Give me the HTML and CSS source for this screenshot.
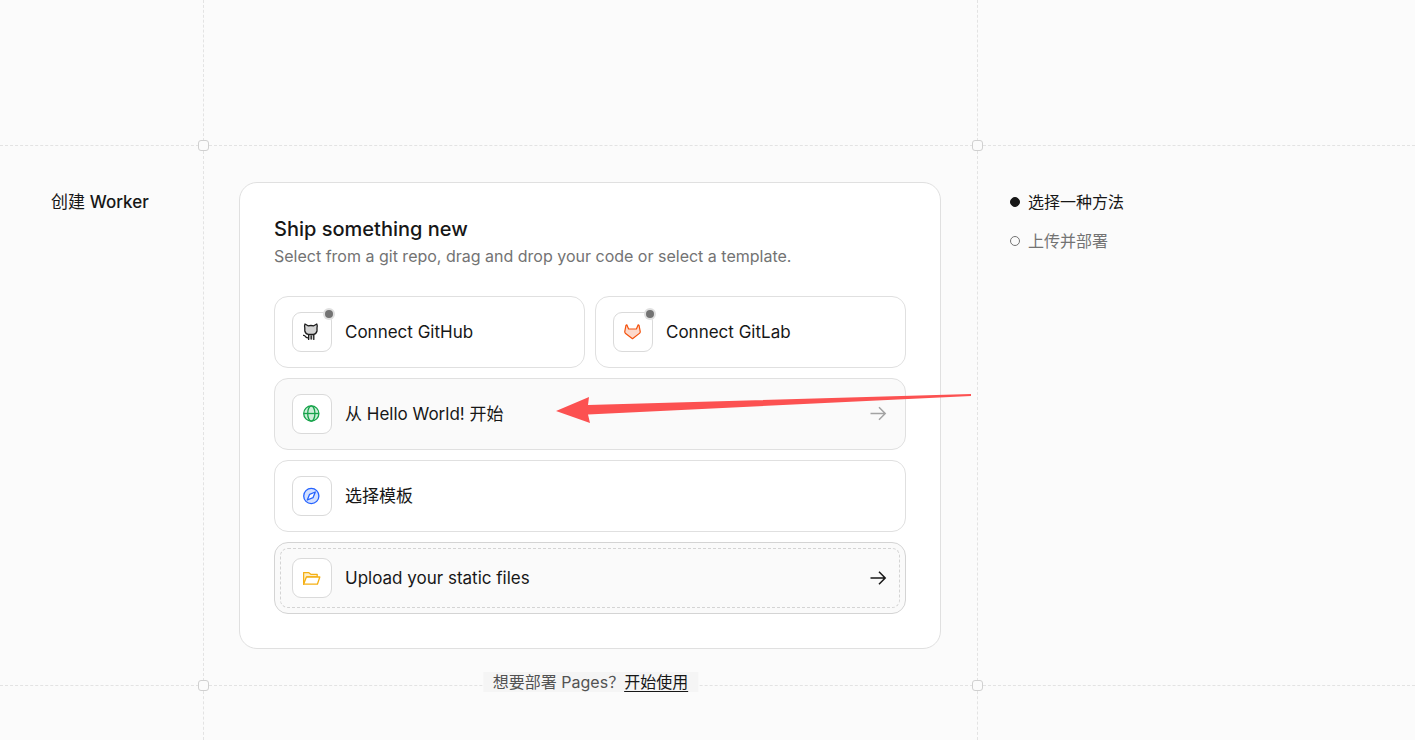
FILE: index.html
```html
<!DOCTYPE html>
<html lang="zh-CN">

<head>
	<meta charset="UTF-8">
	<meta name="viewport" content="width=device-width, initial-scale=1.0">
	<title>创建 Worker</title>
	<link rel="stylesheet" href="styles.css">
</head>

<body>

	<div class="page">
		<div class="cell"><span class="joint"></span></div>
		<div class="cell"><span class="joint"></span></div>
		<div class="cell last"></div>

		<div class="cell side">
			<h1 class="page-title">创建 <span class="product">Worker</span></h1>
			<span class="joint"></span>
		</div>

		<main class="cell main">
			<section class="card">
				<h2 class="card-title">Ship something new</h2>
				<p class="card-text">Select from a git repo, drag and drop your code or select a template.</p>

				<div class="options">
					<button type="button" class="option half">
						<span class="tile">
							<svg class="icon" viewBox="0 0 18 18" fill="none" stroke="#1d1d1d" stroke-width="1.3" stroke-linecap="round" stroke-linejoin="round">
								<path fill="#d4d4d4" d="M5.6 16.4V11.6H10.8V16.4" />
								<path fill="#d4d4d4" d="M2 1L5 2.8Q8 2.2 10.8 2.8L13.8 1Q14.6 3 14 4.8V8Q13.2 11 10.4 11.4H5.4Q2.6 11 1.8 8V4.8Q1.2 3 2 1Z" />
								<path d="M0.4 12.4Q1.8 12.2 2.4 13.6Q3 15 5.4 14.8M8.2 13V16" />
							</svg>
							<span class="status"></span>
						</span>
						Connect GitHub
					</button>
					<button type="button" class="option half">
						<span class="tile">
							<svg class="icon" viewBox="0 0 18 18" fill="#fcd9cb" stroke="#f4510b" stroke-width="1.2" stroke-linejoin="round">
								<path d="M2.8 1.8L4.6 6H12.4L14.2 1.8L15 2.2L16.2 8.3Q16.4 9.6 15.4 10.4L8.5 15.7L1.6 10.4Q0.6 9.6 0.8 8.3L2 2.2Z" />
							</svg>
							<span class="status"></span>
						</span>
						Connect GitLab
					</button>
					<button type="button" class="option active">
						<span class="tile">
							<svg class="icon" viewBox="0 0 18 18" fill="none" stroke="#16a34a" stroke-width="1.3">
								<circle cx="8.3" cy="8.5" r="7.6" fill="#cdeed9" />
								<ellipse cx="8.3" cy="8.5" rx="3.6" ry="7.6" />
								<path d="M0.8 8.5H15.8" />
							</svg>
						</span>
						从 Hello World! 开始
						<svg class="go" viewBox="0 0 18 18" fill="none" stroke="currentColor" stroke-width="1.5">
							<path d="M0.5 8.5H15M9 2.3L15.2 8.5L9 14.7" />
						</svg>
					</button>
					<button type="button" class="option">
						<span class="tile">
							<svg class="icon" viewBox="0 0 18 18" fill="none" stroke="#2563ff" stroke-width="1.3" stroke-linejoin="round">
								<circle cx="8.3" cy="9" r="7.6" fill="#d3e0ff" />
								<path fill="#fff" d="M12.3 5L10 10.7L4.3 13L6.6 7.3Z" />
							</svg>
						</span>
						选择模板
					</button>
					<button type="button" class="option upload">
						<span class="tile">
							<svg class="icon" viewBox="0 0 18 18" fill="none" stroke="#f5b014" stroke-width="1.3" stroke-linejoin="round">
								<path fill="#fdefc9" d="M0.6 15.2V3.6H5.6L7.8 5.3H14.2V8H4L0.6 15.2Z" />
								<path fill="#fff" d="M0.6 15.2L3.4 8H16.8L14.4 15.2Z" />
							</svg>
						</span>
						Upload your static files
						<svg class="go" viewBox="0 0 18 18" fill="none" stroke="currentColor" stroke-width="1.5">
							<path d="M0.5 9H15M9 2.8L15.2 9L9 15.2" />
						</svg>
					</button>
				</div>
			</section>

			<p class="pages-hint">想要部署 Pages？<a href="#">开始使用</a></p>
			<svg class="pointer" viewBox="0 0 416 30">
				<path fill="#fc5151" d="M0 17L33 3L32 11L415 0V2L32 20.5L34 29Z" />
			</svg>
			<span class="joint"></span>
		</main>

		<aside class="cell side last">
			<ol class="steps">
				<li class="step current">选择一种方法</li>
				<li class="step">上传并部署</li>
			</ol>
		</aside>

		<div class="cell bottom"></div>
		<div class="cell bottom"></div>
	</div>

</body>

</html>
```
FILE: styles.css
```css
* {
	box-sizing: border-box;
}

body {
	margin: 0;
	background-color: #fbfbfb;
	color: #171717;
	font-family: Inter, "Noto Sans CJK SC", sans-serif;
	font-size: 16px;
	line-height: 24px;
}

h1,
h2,
p,
ol {
	margin: 0;
	padding: 0;
}

.page {
	display: grid;
	grid-template-columns: 204px minmax(0, 774px) 1fr;
	grid-template-rows: 146px auto 1fr;
	min-height: 100vh;
}

/* dashed guide lines */
.cell {
	position: relative;
	border-right: 1px dashed #e3e3e3;
	border-bottom: 1px dashed #e3e3e3;
}

.last {
	border-right: 0;
}

.bottom {
	border-bottom: 0;
}

.joint {
	position: absolute;
	right: -6px;
	bottom: -6px;
	z-index: 1;
	width: 11px;
	height: 11px;
	border: 1px solid #d0d0d0;
	border-radius: 3px;
	background-color: #fbfbfb;
}

.side {
	padding: 44px 32px;
}

.page-title {
	padding-left: 19px;
	font-size: 17px;
	font-weight: 400;
}

.product {
	font-weight: 500;
}

.main {
	padding: 36px 36px 36px 35px;
}

.card {
	padding: 34px;
	border: 1px solid #e0e0e0;
	border-radius: 18px;
	background-color: #fff;
}

.card-title {
	font-size: 20px;
	font-weight: 500;
	line-height: 24px;
}

.card-text {
	margin: 3px 0 28px;
	color: #737373;
}

.options {
	display: grid;
	grid-template-columns: 1fr 1fr;
	gap: 10px;
}

.option {
	position: relative;
	display: flex;
	grid-column: span 2;
	align-items: center;
	gap: 13px;
	height: 72px;
	padding: 0 17px;
	border: 1px solid #e0e0e0;
	border-radius: 14px;
	background-color: #fff;
	color: #171717;
	font: inherit;
	font-size: 17px;
	text-align: left;
	cursor: pointer;
}

.half {
	grid-column: span 1;
}

.active,
.upload {
	background-color: #fafafa;
}

.upload {
	border-color: #d4d4d4;
}

.upload::before {
	content: "";
	position: absolute;
	inset: 5px;
	border: 1px dashed #d4d4d4;
	border-radius: 8px;
}

.tile {
	position: relative;
	display: flex;
	flex: none;
	align-items: center;
	justify-content: center;
	width: 40px;
	height: 40px;
	border: 1px solid #dadada;
	border-radius: 9px;
	background-color: #fff;
}

.icon,
.go {
	width: 18px;
	height: 18px;
}

.go {
	margin-left: auto;
}

.active .go {
	color: #a3a3a3;
}

.status {
	position: absolute;
	top: -3px;
	right: -2px;
	width: 8px;
	height: 8px;
	border-radius: 50%;
	background-color: #737373;
	box-shadow: 0 0 0 2px #e0e0e0;
}

.pages-hint {
	position: absolute;
	bottom: -7px;
	left: 50%;
	padding: 0 10px;
	background-color: #f5f5f5;
	color: #525252;
	line-height: 20px;
	white-space: nowrap;
	transform: translateX(-50%);
}

.pages-hint a {
	color: #171717;
	text-underline-offset: 3px;
}

.pointer {
	position: absolute;
	top: 248px;
	right: 5px;
	width: 416px;
	height: 30px;
	pointer-events: none;
}

.steps {
	display: grid;
	gap: 15px;
	list-style: none;
}

.step {
	display: flex;
	align-items: center;
	gap: 8px;
	color: #737373;
}

.step::before {
	content: "";
	width: 8px;
	height: 8px;
	border: 1px solid currentColor;
	border-radius: 50%;
}

.current {
	color: #171717;
}

.current::before {
	background-color: currentColor;
}
```
